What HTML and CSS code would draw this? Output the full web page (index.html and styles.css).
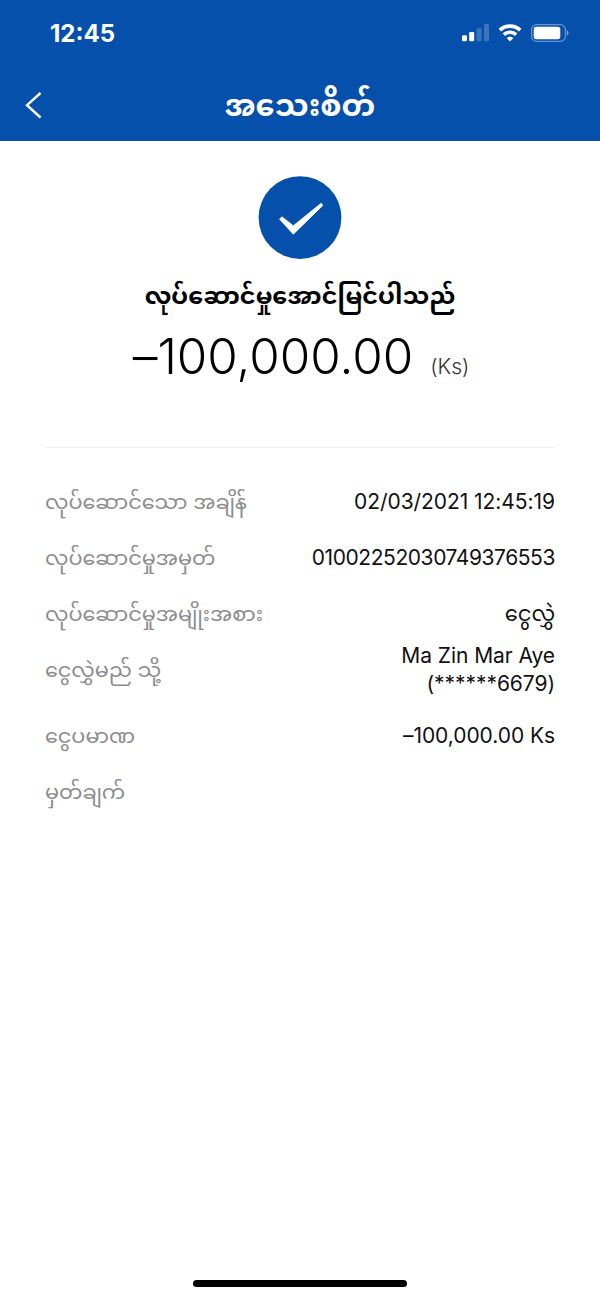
FILE: index.html
```
<!DOCTYPE html>
<html lang="my">
<head>
    <meta charset="UTF-8">
    <meta name="viewport" content="width=device-width, initial-scale=1.0">
    <title>အသေးစိတ်</title>
    <link rel="stylesheet" href="styles.css">
</head>
<body>
    <header class="header">
        <div class="status-bar">
            <span class="clock">12:45</span>
            <div class="status-icons">
                <svg class="signal" width="27" height="18" viewBox="0 0 27 18" fill="#fff">
                    <rect x="0" y="11.3" width="5" height="6" rx="1.3"/>
                    <rect x="7.2" y="8" width="5" height="9.3" rx="1.3"/>
                    <rect x="14.6" y="4.3" width="5" height="13" rx="1.3" opacity="0.22"/>
                    <rect x="22" y="0" width="5" height="17.3" rx="1.3" opacity="0.22"/>
                </svg>
                <svg class="wifi" width="24" height="18" viewBox="0 0 24 18" fill="none" stroke="#fff" stroke-width="3.6">
                    <path d="M1.8 6.1a15.1 15.1 0 0 1 20.4 0"/>
                    <path d="M5.8 10.6a9.2 9.2 0 0 1 12.4 0"/>
                    <path d="M12 17.5l-3.4-3.4a5 5 0 0 1 6.8 0z" fill="#fff" stroke="none"/>
                </svg>
                <svg class="battery" width="38" height="18" viewBox="0 0 38 18">
                    <rect x="0.6" y="0.6" width="33.8" height="16.8" rx="5" fill="none" stroke="#fff" stroke-opacity="0.4" stroke-width="1.2"/>
                    <rect x="2.7" y="2.8" width="26.6" height="12.4" rx="2.6" fill="#fff"/>
                    <path d="M35.8 6.2v5.6c2.2-1 2.2-4.6 0-5.6z" fill="#fff" fill-opacity="0.5"/>
                </svg>
            </div>
        </div>
        <div class="nav-bar">
            <svg class="back" width="18" height="28" viewBox="0 0 18 28" fill="none" stroke="#fff" stroke-width="2.4">
                <path d="M15.5 2L2 14.2l13.5 12.3"/>
            </svg>
            <h1 class="title">အသေးစိတ်</h1>
        </div>
    </header>
    <main class="receipt">
        <svg class="check" width="84" height="84" viewBox="0 0 84 84">
            <circle cx="42" cy="41.6" r="41.4" fill="#0450ab"/>
            <path d="M21.6 43.2l2.3-2.4 11.4 9L63.2 27.2l1.6 2.2-29.5 28.8z" fill="#fff" stroke="#fff" stroke-width="0.8" stroke-linejoin="round"/>
        </svg>
        <h2 class="result">လုပ်ဆောင်မှုအောင်မြင်ပါသည်</h2>
        <div class="amount">
            <span class="amount-value">–100,000.00</span>
            <span class="amount-unit">(Ks)</span>
        </div>
        <dl class="details">
            <div class="row"><dt>လုပ်ဆောင်သော အချိန်</dt><dd>02/03/2021 12:45:19</dd></div>
            <div class="row"><dt>လုပ်ဆောင်မှုအမှတ်</dt><dd class="number">01002252030749376553</dd></div>
            <div class="row"><dt>လုပ်ဆောင်မှုအမျိုးအစား</dt><dd>ငွေလွှဲ</dd></div>
            <div class="row row-name"><dt>ငွေလွှဲမည် သို့</dt><dd>Ma Zin Mar Aye<br>(******6679)</dd></div>
            <div class="row"><dt>ငွေပမာဏ</dt><dd>–100,000.00 Ks</dd></div>
            <div class="row"><dt>မှတ်ချက်</dt><dd></dd></div>
        </dl>
    </main>
    <div class="home-bar"></div>
</body>
</html>
```
FILE: styles.css
```
* {
    box-sizing: border-box;
}
body {
    margin: 0;
    height: 1299px;
    display: flex;
    flex-direction: column;
    background-color: #fff;
    color: #111;
    font-family: Inter, "Noto Sans Myanmar", sans-serif;
}
.header {
    height: 141px;
    background-color: #0450ab;
    color: #fff;
}
.status-bar {
    height: 66px;
    padding: 0 31px 0 50px;
    display: flex;
    align-items: center;
    justify-content: space-between;
}
.clock {
    font-size: 24px;
    font-weight: 700;
}
.status-icons {
    display: flex;
    align-items: center;
    gap: 9px;
}
.nav-bar {
    height: 75px;
    padding: 3px 43px 0 25px;
    display: flex;
    align-items: center;
}
.title {
    flex: 1;
    margin: 0;
    text-align: center;
    font-size: 30.4px;
    line-height: 72px;
}
.receipt {
    flex: 1;
    padding: 35px 45px 0;
    display: flex;
    flex-direction: column;
    align-items: center;
}
.result {
    height: 50px;
    margin: 11px 0 0;
    color: #000;
    font-size: 24px;
    line-height: 50px;
    white-space: nowrap;
}
.amount {
    height: 126px;
    padding-left: 2px;
    display: flex;
    align-items: baseline;
    gap: 17px;
    line-height: 70px;
    font-feature-settings: "calt" 0; /* keeps the dash low, next to the digits */
}
.amount-value {
    color: #000;
    font-size: 49.4px;
    font-weight: 350;
}
.amount-unit {
    font-size: 21px;
    font-weight: 300;
    color: #333;
}
.details {
    width: 100%;
    margin: 0;
    padding-top: 26px;
    border-top: 1px solid #eee;
    font-size: 21px;
    font-feature-settings: "calt" 0;
}
.row {
    height: 56px;
    display: flex;
    align-items: center;
    justify-content: space-between;
    line-height: 28px;
}
.row-name {
    margin-bottom: 10px;
}
.row dt {
    color: #8c8c8c;
    font-size: 20.8px;
    white-space: nowrap;
}
.row dd {
    margin: 0;
    text-align: right;
    letter-spacing: -0.06px;
}
.row .number {
    letter-spacing: -0.43px;
}
.home-bar {
    width: 214px;
    height: 7px;
    margin: 0 auto 12px;
    border-radius: 4px;
    background-color: #000;
}
```
